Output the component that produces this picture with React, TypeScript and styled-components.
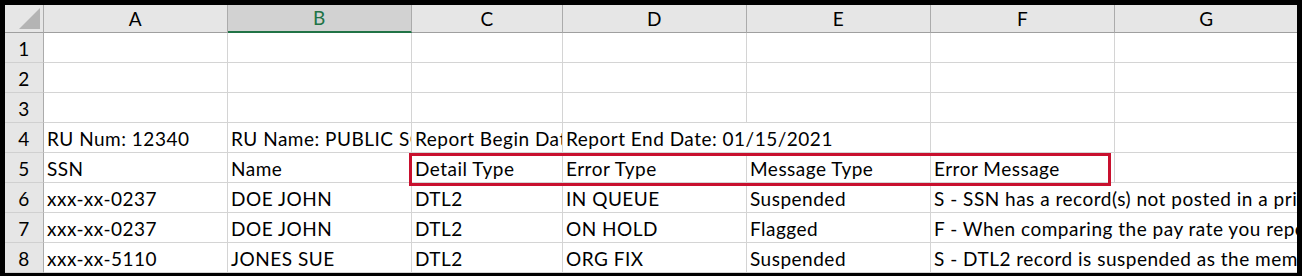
import React from "react";
import styled, { createGlobalStyle } from "styled-components";

const GlobalStyle = createGlobalStyle`
  html, body {
    margin: 0;
    padding: 0;
    background: #000;
  }
  * {
    box-sizing: border-box;
  }
`;

type Cell = {
  text?: string;
  span?: number;
};

const columns = ["A", "B", "C", "D", "E", "F", "G"];
// row header + A..G
const widths = [39, 184, 184, 151, 184, 184, 184, 184];
const activeColumn = "B";

const rows: Cell[][] = [
  [{}, {}, {}, {}, {}, {}, {}],
  [{}, {}, {}, {}, {}, {}, {}],
  [{}, {}, {}, {}, {}, {}, {}],
  [
    { text: "RU Num: 12340" },
    { text: "RU Name: PUBLIC SCHOOLS" },
    { text: "Report Begin Date: 01/01/2021" },
    { text: "Report End Date: 01/15/2021", span: 2 },
    {},
    {},
  ],
  [
    { text: "SSN" },
    { text: "Name" },
    { text: "Detail Type" },
    { text: "Error Type" },
    { text: "Message Type" },
    { text: "Error Message" },
    {},
  ],
  [
    { text: "xxx-xx-0237" },
    { text: "DOE JOHN" },
    { text: "DTL2" },
    { text: "IN QUEUE" },
    { text: "Suspended" },
    { text: "S - SSN has a record(s) not posted in a prior period", span: 2 },
  ],
  [
    { text: "xxx-xx-0237" },
    { text: "DOE JOHN" },
    { text: "DTL2" },
    { text: "ON HOLD" },
    { text: "Flagged" },
    { text: "F - When comparing the pay rate you reported", span: 2 },
  ],
  [
    { text: "xxx-xx-5110" },
    { text: "JONES SUE" },
    { text: "DTL2" },
    { text: "ORG FIX" },
    { text: "Suspended" },
    { text: "S - DTL2 record is suspended as the member", span: 2 },
  ],
];

const App = (): JSX.Element => {
  return (
    <Frame>
      <GlobalStyle />
      <Sheet>
        <Grid>
          <Corner>
            <span className="tri" />
          </Corner>
          {columns.map((col) => (
            <ColHead key={col} active={col === activeColumn}>
              {col}
            </ColHead>
          ))}

          {rows.map((row, r) => (
            <React.Fragment key={r}>
              <RowHead>{r + 1}</RowHead>
              {row.map((cell, c) => (
                <DataCell key={c} span={cell.span ?? 1}>
                  {cell.text}
                </DataCell>
              ))}
            </React.Fragment>
          ))}
        </Grid>
        <Highlight />
      </Sheet>
    </Frame>
  );
};

const Frame = styled.div`
  width: 1302px;
  height: 276px;
  padding: 5px 5px 3px 5px;
  background: #000;
`;

const Sheet = styled.div`
  position: relative;
  width: 100%;
  height: 100%;
  overflow: hidden;
  background: #fff;
  font-family: Lato, "Liberation Sans", sans-serif;
  font-size: 19px;
  letter-spacing: 0.5px;
  color: #000;
`;

const Grid = styled.div`
  display: grid;
  grid-template-columns: ${widths.map((w) => `${w}px`).join(" ")};
  grid-template-rows: 28px repeat(8, 30px);
`;

const Corner = styled.div`
  position: relative;
  background: #e6e6e6;
  border-right: 1px solid #ababab;
  border-bottom: 1px solid #9f9f9f;

  .tri {
    position: absolute;
    right: 3px;
    bottom: 3px;
    width: 21px;
    height: 21px;
    background: #b4b4b4;
    clip-path: polygon(100% 0, 100% 100%, 0 100%);
  }
`;

const ColHead = styled.div<{ active: boolean }>`
  display: flex;
  align-items: flex-end;
  justify-content: center;
  padding-bottom: 3px;
  background: ${({ active }) => (active ? "#d2d2d2" : "#e6e6e6")};
  color: ${({ active }) => (active ? "#217346" : "#000")};
  border-right: 1px solid #ababab;
  border-bottom: ${({ active }) =>
    active ? "2px solid #217346" : "1px solid #9f9f9f"};
  line-height: 20px;
`;

const RowHead = styled.div`
  display: flex;
  align-items: flex-end;
  justify-content: center;
  padding-bottom: 3px;
  background: #e6e6e6;
  border-right: 1px solid #ababab;
  border-bottom: 1px solid #d0d0d0;
  line-height: 20px;
`;

const DataCell = styled.div<{ span: number }>`
  grid-column: span ${({ span }) => span};
  display: flex;
  align-items: flex-end;
  padding: 0 0 3px 3px;
  border-right: 1px solid #d4d4d4;
  border-bottom: 1px solid #d4d4d4;
  white-space: nowrap;
  overflow: hidden;
  line-height: 20px;
`;

const Highlight = styled.div`
  position: absolute;
  left: 404px;
  top: 148px;
  width: 702px;
  height: 33px;
  border: 3px solid #c8102e;
  pointer-events: none;
`;

export default App;
